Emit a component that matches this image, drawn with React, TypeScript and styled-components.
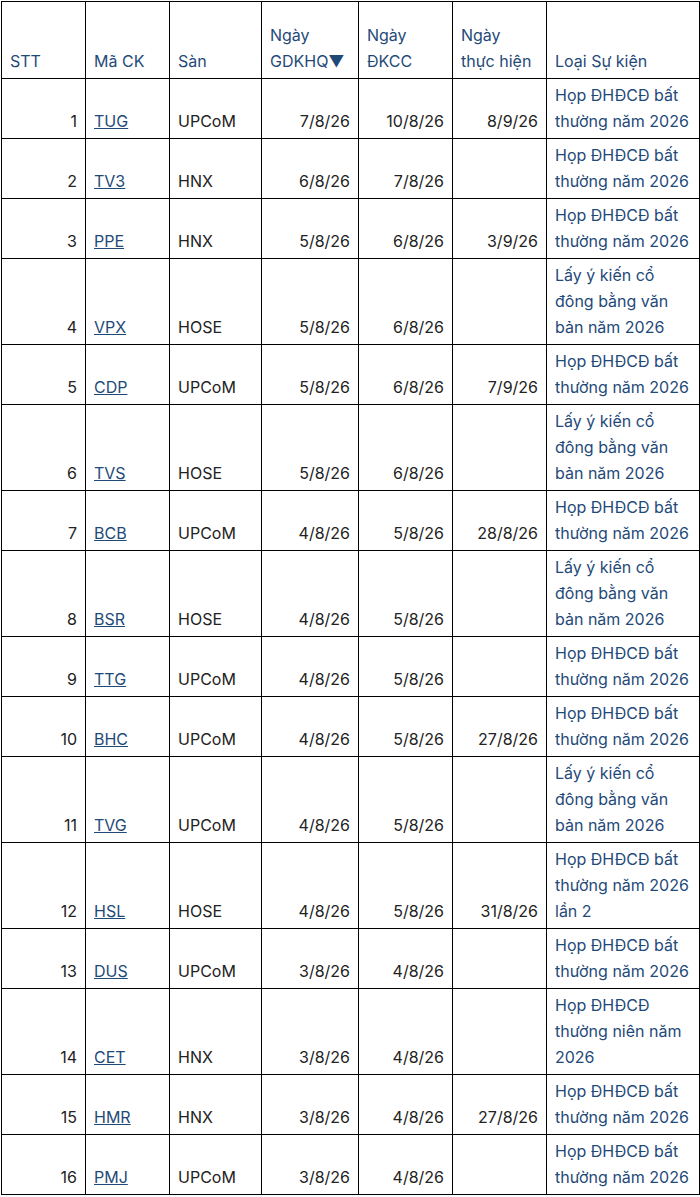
import React from "react"
import styled, { createGlobalStyle } from "styled-components"

const GlobalStyle = createGlobalStyle`
    html, body {
        margin: 0;
        padding: 0;
        background: #fff;
    }
    body {
        font-family: Inter, "Noto Sans", "Liberation Sans", sans-serif;
        font-size: 16px;
        color: #222;
    }
`

const Table = styled.table`
    border-collapse: collapse;
    width: 698px;
    margin: 1px 0 0 1px;
    table-layout: fixed;

    th,
    td {
        box-sizing: border-box;
    }
`

const HeadCell = styled.th<{ $width: number }>`
    width: ${(p) => p.$width}px;
    height: 77px;
    border: 1px solid #000;
    padding: 3px 8px 4px;
    vertical-align: bottom;
    text-align: left;
    font-weight: 400;
    line-height: 26px;
    color: #1f4a78;
`

const Cell = styled.td<{ $align?: "left" | "right" }>`
    border: 1px solid #000;
    padding: 3px 8px 4px;
    vertical-align: bottom;
    text-align: ${(p) => p.$align ?? "left"};
    line-height: 26px;
    color: #222;
`

const EventCell = styled(Cell)`
    color: #1f4a78;
`

const Ticker = styled.a`
    color: #1f4a78;
    text-decoration: underline;
    cursor: pointer;
`

type EventRow = {
    code: string
    exchange: string
    exDate: string
    recordDate: string
    payDate: string
    event: string
}

const HOP = "Họp ĐHĐCĐ bất thường năm 2026"
const LAY = "Lấy ý kiến cổ đông bằng văn bản năm 2026"

const rows: EventRow[] = [
    { code: "TUG", exchange: "UPCoM", exDate: "7/8/26", recordDate: "10/8/26", payDate: "8/9/26", event: HOP },
    { code: "TV3", exchange: "HNX", exDate: "6/8/26", recordDate: "7/8/26", payDate: "", event: HOP },
    { code: "PPE", exchange: "HNX", exDate: "5/8/26", recordDate: "6/8/26", payDate: "3/9/26", event: HOP },
    { code: "VPX", exchange: "HOSE", exDate: "5/8/26", recordDate: "6/8/26", payDate: "", event: LAY },
    { code: "CDP", exchange: "UPCoM", exDate: "5/8/26", recordDate: "6/8/26", payDate: "7/9/26", event: HOP },
    { code: "TVS", exchange: "HOSE", exDate: "5/8/26", recordDate: "6/8/26", payDate: "", event: LAY },
    { code: "BCB", exchange: "UPCoM", exDate: "4/8/26", recordDate: "5/8/26", payDate: "28/8/26", event: HOP },
    { code: "BSR", exchange: "HOSE", exDate: "4/8/26", recordDate: "5/8/26", payDate: "", event: LAY },
    { code: "TTG", exchange: "UPCoM", exDate: "4/8/26", recordDate: "5/8/26", payDate: "", event: HOP },
    { code: "BHC", exchange: "UPCoM", exDate: "4/8/26", recordDate: "5/8/26", payDate: "27/8/26", event: HOP },
    { code: "TVG", exchange: "UPCoM", exDate: "4/8/26", recordDate: "5/8/26", payDate: "", event: LAY },
    { code: "HSL", exchange: "HOSE", exDate: "4/8/26", recordDate: "5/8/26", payDate: "31/8/26", event: HOP + " lần 2" },
    { code: "DUS", exchange: "UPCoM", exDate: "3/8/26", recordDate: "4/8/26", payDate: "", event: HOP },
    { code: "CET", exchange: "HNX", exDate: "3/8/26", recordDate: "4/8/26", payDate: "", event: "Họp ĐHĐCĐ thường niên năm 2026" },
    { code: "HMR", exchange: "HNX", exDate: "3/8/26", recordDate: "4/8/26", payDate: "27/8/26", event: HOP },
    { code: "PMJ", exchange: "UPCoM", exDate: "3/8/26", recordDate: "4/8/26", payDate: "", event: HOP },
]

const columns: { label: string; width: number }[] = [
    { label: "STT", width: 84 },
    { label: "Mã CK", width: 84 },
    { label: "Sàn", width: 92 },
    { label: "Ngày GDKHQ▼", width: 97 },
    { label: "Ngày ĐKCC", width: 94 },
    { label: "Ngày thực hiện", width: 94 },
    { label: "Loại Sự kiện", width: 153 },
]

export default function App(): JSX.Element {
    return (
        <>
            <GlobalStyle />
            <Table>
                <thead>
                    <tr>
                        {columns.map((c, i) => (
                            <HeadCell key={i} $width={c.width}>
                                {c.label}
                            </HeadCell>
                        ))}
                    </tr>
                </thead>
                <tbody>
                    {rows.map((r, i) => (
                        <tr key={r.code}>
                            <Cell $align="right">{i + 1}</Cell>
                            <Cell>
                                <Ticker>{r.code}</Ticker>
                            </Cell>
                            <Cell>{r.exchange}</Cell>
                            <Cell $align="right">{r.exDate}</Cell>
                            <Cell $align="right">{r.recordDate}</Cell>
                            <Cell $align="right">{r.payDate}</Cell>
                            <EventCell>{r.event}</EventCell>
                        </tr>
                    ))}
                </tbody>
            </Table>
        </>
    )
}
